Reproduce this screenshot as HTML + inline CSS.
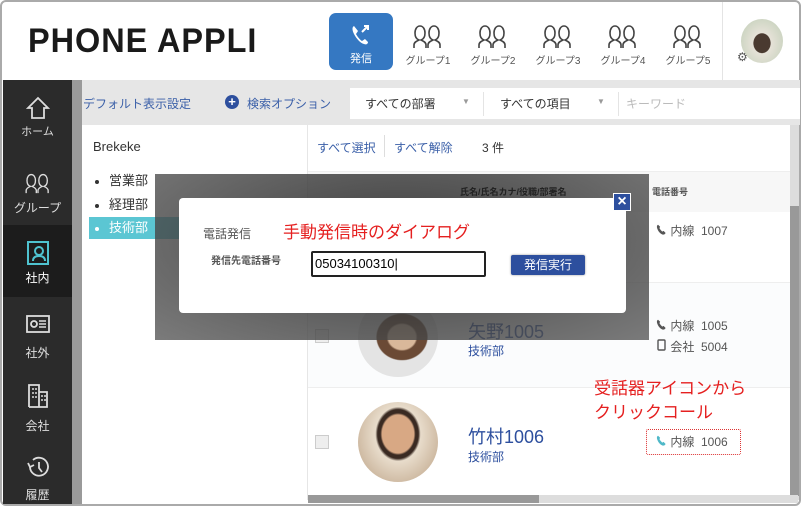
<!DOCTYPE html>
<html><head><meta charset="utf-8"><style>
*{margin:0;padding:0;box-sizing:border-box}
body{width:801px;height:506px;overflow:hidden;background:#fff;font-family:"Liberation Sans","Noto Sans CJK JP",sans-serif;position:relative}
.a{position:absolute}
.frame{left:0;top:0;width:801px;height:506px;border:2px solid #aaa;border-radius:6px}
.side{left:3px;top:80px;width:69px;height:424px;background:#2b2b2b;color:#ddd;font-size:12px;text-align:center}
.side .it{position:absolute;left:0;width:69px}
.grp{font-size:10px;color:#555;text-align:center;width:60px}
.dot{display:inline-block;width:4px;height:4px;border-radius:50%;background:#333;margin-right:10px;vertical-align:middle}
</style></head><body>
<svg width="0" height="0" style="position:absolute"><defs>
<symbol id="g" viewBox="0 0 32 26"><g fill="none" stroke-width="1.6"><path d="M2 25v-3c0-3 3-4 5-5-3-1-4-4-4-7 0-4 2-7 5-7s5 3 5 7c0 3-1 6-4 7 2 1 5 2 5 5v3"/><path d="M16 25v-3c0-3 3-4 5-5-3-1-4-4-4-7 0-4 2-7 5-7s5 3 5 7c0 3-1 6-4 7 2 1 5 2 5 5v3"/></g></symbol>
<symbol id="p" viewBox="0 0 16 16"><path d="M3 1c-2 1-2 3-1 6s4 7 7 8c2 1 4 0 5-2l-3-3-2 1c-1-1-3-3-4-5l1-2z"/></symbol>
</defs></svg>
<div class="a frame"></div>
<div class="a" style="left:28px;top:22px;font-size:34px;font-weight:bold;color:#1a1a1a;letter-spacing:1px;transform:scaleX(.955);transform-origin:left">PHONE APPLI</div>
<div class="a" style="left:329px;top:13px;width:64px;height:57px;background:#3578c2;border-radius:7px;color:#fff;text-align:center;font-size:11px">
<svg width="24" height="24" viewBox="0 0 24 24" style="margin-top:10px"><path d="M5 3c-2 1-2 4 0 8s6 9 10 10c2 1 4 0 4-2l-3-3-3 2c-2-1-5-5-6-7l2-3z" fill="#fff"/><path d="M13 9l6-6M15 3h4v4" stroke="#fff" stroke-width="2" fill="none"/></svg><div>発信</div></div>
<div class="a" style="left:398px;top:23px;display:flex;gap:5px">
<div class="grp"><svg width="32" height="26" stroke="#444"><use href="#g"/></svg><div>グループ1</div></div>
<div class="grp"><svg width="32" height="26" stroke="#444"><use href="#g"/></svg><div>グループ2</div></div>
<div class="grp"><svg width="32" height="26" stroke="#444"><use href="#g"/></svg><div>グループ3</div></div>
<div class="grp"><svg width="32" height="26" stroke="#444"><use href="#g"/></svg><div>グループ4</div></div>
<div class="grp"><svg width="32" height="26" stroke="#444"><use href="#g"/></svg><div>グループ5</div></div>
</div>
<div class="a" style="left:722px;top:2px;width:1px;height:78px;background:#e4e4e4"></div>
<div class="a" style="left:741px;top:19px;width:42px;height:44px;border-radius:50%;background:radial-gradient(ellipse at 50% 55%,#4a3a30 0 28%,#e6e2d8 30%,#cfd6c4 70%)"></div>
<div class="a" style="left:737px;top:50px;font-size:12px;color:#555">⚙</div>
<div class="a" style="left:72px;top:80px;width:728px;height:45px;background:#e6e6e6"></div>
<div class="a" style="left:72px;top:80px;width:10px;height:424px;background:#9a9a9a"></div>
<div class="a" style="left:83px;top:95px;font-size:12px;color:#3a5fa8">デフォルト表示設定</div>
<div class="a" style="left:225px;top:95px;width:14px;height:14px;border-radius:50%;background:#2d4f9e;color:#fff;font-size:13px;line-height:13px;text-align:center;font-weight:bold">+</div>
<div class="a" style="left:247px;top:95px;font-size:12px;color:#3a5fa8">検索オプション</div>
<div class="a" style="left:350px;top:88px;width:450px;height:31px;background:#fff"></div>
<div class="a" style="left:365px;top:95px;font-size:12px;color:#333">すべての部署</div>
<div class="a" style="left:462px;top:97px;font-size:8px;color:#999">▼</div>
<div class="a" style="left:483px;top:92px;width:1px;height:24px;background:#e4e4e4"></div>
<div class="a" style="left:500px;top:95px;font-size:12px;color:#333">すべての項目</div>
<div class="a" style="left:597px;top:97px;font-size:8px;color:#999">▼</div>
<div class="a" style="left:618px;top:92px;width:1px;height:24px;background:#e4e4e4"></div>
<div class="a" style="left:626px;top:95px;font-size:12px;color:#bbb">キーワード</div>
<div class="a side">
<div class="it" style="top:16px"><svg width="24" height="24" viewBox="0 0 24 24"><path d="M12 2L2 12h4v10h12V12h4z" fill="none" stroke="#ddd" stroke-width="1.8"/></svg><div style="font-size:11px">ホーム</div></div>
<div class="it" style="top:92px"><svg width="28" height="22" stroke="#ddd"><use href="#g"/></svg><div style="margin-top:2px">グループ</div></div>
<div class="it" style="top:145px;height:72px;background:#1c1c1c;padding-top:15px"><svg width="24" height="26" viewBox="0 0 24 26"><rect x="2" y="2" width="20" height="22" fill="none" stroke="#4fc3d0" stroke-width="2"/><circle cx="13" cy="11" r="4" fill="none" stroke="#4fc3d0" stroke-width="2"/><path d="M7 21c0-4 3-5 6-5s6 1 6 5" fill="none" stroke="#4fc3d0" stroke-width="2"/></svg><div style="color:#fff">社内</div></div>
<div class="it" style="top:235px"><svg width="24" height="18" viewBox="0 0 24 18"><rect x="1" y="1" width="22" height="16" fill="none" stroke="#ddd" stroke-width="1.8"/><circle cx="8" cy="9" r="3" fill="none" stroke="#ddd" stroke-width="1.8"/><path d="M13 6h7M13 9h7M13 12h7" stroke="#ddd" stroke-width="1.5"/></svg><div style="margin-top:8px">社外</div></div>
<div class="it" style="top:304px"><svg width="22" height="24" viewBox="0 0 22 24"><path d="M2 23V1h10v22M12 8h8v15H2" fill="none" stroke="#ddd" stroke-width="1.8"/><path d="M5 5h2M8 5h2M5 9h2M8 9h2M5 13h2M8 13h2M14 12h2M17 12h2M14 16h2M17 16h2" stroke="#ddd" stroke-width="1.6"/></svg><div style="margin-top:6px">会社</div></div>
<div class="it" style="top:375px"><svg width="26" height="24" viewBox="0 0 26 24"><path d="M5 12a9 9 0 1 0 3-7" fill="none" stroke="#ddd" stroke-width="1.8"/><path d="M3 8l2 4 4-2" fill="none" stroke="#ddd" stroke-width="1.8"/><path d="M14 7v6l3 4" fill="none" stroke="#ddd" stroke-width="1.8"/></svg><div style="margin-top:4px">履歴</div></div>
</div>
<div class="a" style="left:307px;top:125px;width:1px;height:375px;background:#e6e6e6"></div>
<div class="a" style="left:93px;top:139px;font-size:13px;color:#333">Brekeke</div>
<div class="a" style="left:95px;top:169px;font-size:13px;color:#333;line-height:24px">
<div><span class="dot"></span>営業部</div><div><span class="dot"></span>経理部</div></div>
<div class="a" style="left:89px;top:217px;width:112px;height:22px;background:#5bc6d3;color:#fff;font-size:13px;line-height:22px;padding-left:6px"><span class="dot" style="background:#fff"></span>技術部</div>
<div class="a" style="left:317px;top:139px;font-size:12px;color:#3a5fa8">すべて選択</div>
<div class="a" style="left:384px;top:135px;width:1px;height:22px;background:#ddd"></div>
<div class="a" style="left:394px;top:139px;font-size:12px;color:#3a5fa8">すべて解除</div>
<div class="a" style="left:482px;top:139px;font-size:12px;color:#333">3 件</div>
<div class="a" style="left:308px;top:171px;width:482px;height:41px;background:#f7f7f7;border-top:1px solid #eee"></div>
<div class="a" style="left:652px;top:185px;font-size:9px;color:#555;font-weight:bold">電話番号</div>
<div class="a" style="left:308px;top:282px;width:482px;height:1px;background:#eee"></div>
<div class="a" style="left:308px;top:283px;width:482px;height:104px;background:#fbfcfd"></div>
<div class="a" style="left:308px;top:387px;width:482px;height:1px;background:#eee"></div>
<div class="a" style="left:656px;top:222px;font-size:12px;color:#555"><svg width="11" height="11" fill="#555"><use href="#p"/></svg> 内線&nbsp; 1007</div>
<div class="a" style="left:656px;top:316px;font-size:12px;color:#555;line-height:21px"><div><svg width="11" height="11" fill="#555"><use href="#p"/></svg> 内線&nbsp; 1005</div><div><svg width="11" height="12" viewBox="0 0 11 12"><rect x="2" y="1" width="7" height="10" rx="1" fill="none" stroke="#555" stroke-width="1.4"/></svg> 会社&nbsp; 5004</div></div>
<div class="a" style="left:315px;top:329px;width:14px;height:14px;border:1px solid #ccc;background:#eee"></div>
<div class="a" style="left:315px;top:435px;width:14px;height:14px;border:1px solid #ccc;background:#eee"></div>
<div class="a" style="left:358px;top:297px;width:80px;height:80px;border-radius:50%;background:radial-gradient(ellipse at 55% 50%,#d9b89a 0 22%,#6b4a35 25% 40%,#e4e4e4 42%)"></div>
<div class="a" style="left:358px;top:402px;width:80px;height:80px;border-radius:50%;background:radial-gradient(ellipse at 50% 40%,#d8a884 0 28%,#3a2a22 31% 36%,#e8dccb 40%,#c9b39a 80%)"></div>
<div class="a" style="left:468px;top:318px;font-size:18px;color:#2d4f9e">矢野1005</div>
<div class="a" style="left:468px;top:342px;font-size:12px;color:#2d4f9e">技術部</div>
<div class="a" style="left:468px;top:423px;font-size:18px;color:#2d4f9e">竹村1006</div>
<div class="a" style="left:468px;top:448px;font-size:12px;color:#2d4f9e">技術部</div>
<div class="a" style="left:594px;top:377px;font-size:17px;color:#e52020;line-height:24px">受話器アイコンから<br>クリックコール</div>
<div class="a" style="left:646px;top:429px;width:95px;height:26px;border:1px dotted #d33;border-radius:2px;font-size:12px;color:#555;line-height:24px;padding-left:9px"><svg width="11" height="11" fill="#4fb8c8"><use href="#p"/></svg> 内線&nbsp; 1006</div>
<div class="a" style="left:790px;top:125px;width:9px;height:375px;background:#ddd"></div>
<div class="a" style="left:790px;top:206px;width:9px;height:290px;background:#999"></div>
<div class="a" style="left:308px;top:495px;width:490px;height:8px;background:#ddd"></div>
<div class="a" style="left:308px;top:495px;width:231px;height:8px;background:#999"></div>
<div class="a" style="left:155px;top:174px;width:494px;height:166px;background:radial-gradient(ellipse at 50% 40%,rgba(30,30,30,.85),rgba(90,90,90,.8))"></div>
<div class="a" style="left:460px;top:185px;font-size:9px;color:#222;font-weight:bold">氏名/氏名カナ/役職/部署名</div>
<div class="a" style="left:179px;top:198px;width:447px;height:115px;background:#fff;border-radius:4px"></div>
<div class="a" style="left:613px;top:193px;width:18px;height:18px;background:#2d4f9e;border:1px solid #fff;color:#fff;font-size:16px;line-height:16px;text-align:center;font-weight:bold">×</div>
<div class="a" style="left:203px;top:225px;font-size:12px;color:#555">電話発信</div>
<div class="a" style="left:283px;top:218px;font-size:17px;color:#e52020">手動発信時のダイアログ</div>
<div class="a" style="left:211px;top:252px;font-size:10px;color:#555;font-weight:bold">発信先電話番号</div>
<div class="a" style="left:311px;top:251px;width:175px;height:26px;border:2px solid #222;border-radius:2px;font-size:13px;color:#000;line-height:22px;padding-left:2px">05034100310|</div>
<div class="a" style="left:511px;top:255px;width:74px;height:20px;background:#2d4f9e;color:#fff;font-size:12px;text-align:center;line-height:20px;border-radius:2px;box-shadow:0 0 2px #999">発信実行</div>
</body></html>
